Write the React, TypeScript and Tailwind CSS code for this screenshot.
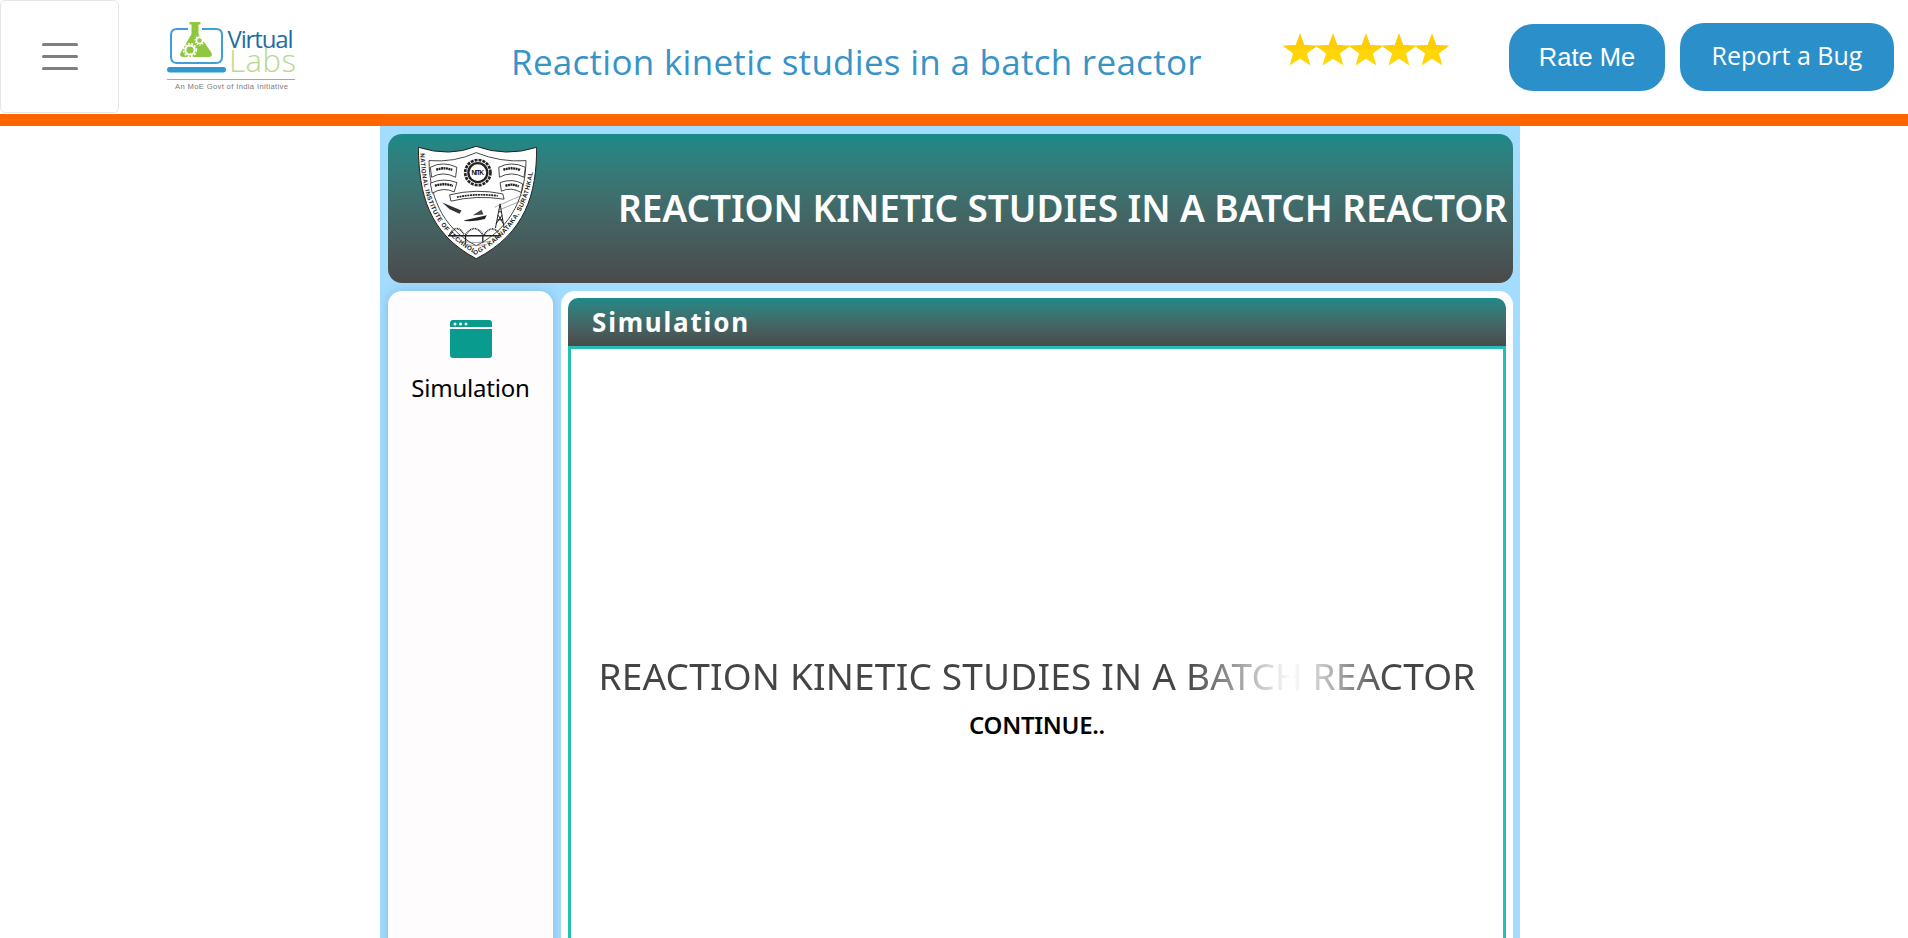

const Star = () => (
  <svg viewBox="0 0 34 32" className="block h-[33px] w-[34px] -mr-[1px]">
    <path d="M17 0 L21.2 11.6 L34 12.2 L24 20 L27.4 32 L17 25.2 L6.6 32 L10 20 L0 12.2 L12.8 11.6 Z" fill="#ffd60a" />
    <path d="M12.8 11.6 L17 0 L21.2 11.6 L34 12.2 L29 16 L5 16 L0 12.2 Z" fill="#ffcd05" />
  </svg>
);

const Logo = () => (
  <svg viewBox="167 20 130 72" className="block h-[72px] w-[130px] shrink-0">
    <path d="M188 29 H177 Q171 29 171 35 V57 Q171 63 177 63 H216 Q222 63 222 57 V35 Q222 29 216 29 H202" fill="none" stroke="#3f9fd6" strokeWidth="2" />
    <path d="M169 67 H224 Q226 67 226 69.5 Q226 72.5 223 72.5 H170 Q167 72.5 167 69.5 Q167 67 169 67 Z" fill="#3298d0" />
    <path d="M189.5 22 H200.5 V24.5 H198.5 V34 L211 52 Q214 57 208 57 H184 Q178 57 181 52 L191.5 34 V24.5 H189.5 Z" fill="#8fc73e" />
    <circle cx="190" cy="50" r="4.6" fill="none" stroke="#fff" strokeWidth="2" />
    <circle cx="190" cy="50" r="6.4" fill="none" stroke="#fff" strokeWidth="1.6" strokeDasharray="2 1.4" />
    <circle cx="199.5" cy="40.5" r="3" fill="none" stroke="#fff" strokeWidth="1.4" />
    <circle cx="199.5" cy="40.5" r="4.4" fill="none" stroke="#fff" strokeWidth="1.2" strokeDasharray="1.5 1.2" />
    <text x="227.5" y="47.5" fontFamily="'Open Sans', sans-serif" fontSize="24" fontWeight="500" fill="#1f6ea3" textLength="66">Virtual</text>
    <text x="229" y="72" fontFamily="'Open Sans', sans-serif" fontSize="31" fontWeight="300" fill="#b6da8c" textLength="67">Labs</text>
    <rect x="167" y="79" width="128" height="1" fill="#a8a8a8" />
    <text x="175" y="89" fontFamily="'Liberation Sans', sans-serif" fontSize="7.6" fill="#7a7a7a" textLength="113">An MoE Govt of India Initiative</text>
  </svg>
);

const Shield = () => (
  <svg viewBox="145 78 358 340" className="block h-[113px] w-[119px] shrink-0">
    <path d="M146 82 Q240 112 320 79 Q410 112 502 82 C502 220 470 340 320 417 C175 340 148 220 146 82 Z" fill="#fff" stroke="#222" strokeWidth="3" />
    <path d="M178 122 Q255 128 320 98 Q395 128 470 122 C468 220 435 320 320 378 C210 320 180 220 178 122 Z" fill="#fff" stroke="#222" strokeWidth="2.5" />
    <path id="band" d="M152 100 C156 225 190 335 320 404 C450 335 490 225 496 100" fill="none" />
    <text fontFamily="'Liberation Sans', sans-serif" fontSize="19" fontWeight="700" fill="#222">
      <textPath href="#band" textLength="680">NATIONAL INSTITUTE OF TECHNOLOGY KARNATAKA, SURATHKAL</textPath>
    </text>
    <circle cx="325" cy="158" r="38" fill="none" stroke="#222" strokeWidth="8" strokeDasharray="9 3" />
    <circle cx="325" cy="158" r="32" fill="#222" />
    <circle cx="325" cy="158" r="25" fill="#fff" />
    <text x="325" y="166" textAnchor="middle" fontFamily="'Liberation Sans', sans-serif" fontSize="20" fontWeight="700" fill="#111" textLength="38">NITK</text>
    <path d="M182 142 Q220 122 262 142 L258 172 Q220 152 186 172 Z" fill="#fff" stroke="#222" strokeWidth="2.5" />
    <path d="M182 190 Q220 172 262 188 L254 216 Q220 200 188 220 Z" fill="#fff" stroke="#222" strokeWidth="2.5" />
    <path d="M388 142 Q425 122 468 142 L464 172 Q425 152 390 172 Z" fill="#fff" stroke="#222" strokeWidth="2.5" />
    <path d="M392 188 Q430 174 460 192 L456 218 Q425 200 396 214 Z" fill="#fff" stroke="#222" strokeWidth="2.5" />
    <path d="M200 150 Q222 140 248 150 M196 198 Q222 188 250 198 M402 150 Q425 140 452 150 M408 198 Q430 190 448 200" fill="none" stroke="#222" strokeWidth="7" strokeDasharray="6 1.5" />
    <path d="M240 225 Q320 205 400 222 L404 238 Q320 225 244 244 Z" fill="#fff" stroke="#222" strokeWidth="2.5" />
    <path d="M262 232 Q320 220 385 228" fill="none" stroke="#222" strokeWidth="5" strokeDasharray="6 2" />
    <path d="M218 248 L276 272 L270 282 L240 268 Z" fill="#333" />
    <path d="M282 302 L352 286 L346 298 Q320 306 288 304 Z" fill="#222" />
    <path d="M310 286 L336 270 L342 284 Z" fill="#444" />
    <path d="M378 325 L392 252 L404 325 M383 300 H400 M387 276 H397 M380 312 L398 286 M402 312 L386 286" fill="none" stroke="#222" strokeWidth="3" />
    <path d="M376 262 L460 225 M386 272 L462 240" fill="none" stroke="#555" strokeWidth="1.5" />
    <path d="M240 345 Q262 308 284 345 M288 345 Q315 308 340 345 M344 345 Q368 310 392 345" fill="none" stroke="#222" strokeWidth="5" strokeDasharray="3 2" />
    <path d="M235 348 H395 M288 345 V370 M340 345 V370" fill="none" stroke="#222" strokeWidth="4" />
    <path d="M270 365 Q320 372 365 365 M285 375 Q320 380 352 375" fill="none" stroke="#777" strokeWidth="2" />
  </svg>
);

export default function App() {
  return (
    <div className="h-[938px] overflow-hidden bg-white font-['Open_Sans',sans-serif]">
      <header className="flex h-[114px] items-start">
        <button className="flex h-[113px] w-[119px] shrink-0 flex-col items-center justify-center gap-[9px] rounded-[5px] border border-[#e6e6e6] bg-white">
          <span className="block h-[3px] w-[36px] rounded-full bg-[#7f7f7f]" />
          <span className="block h-[3px] w-[36px] rounded-full bg-[#7f7f7f]" />
          <span className="block h-[3px] w-[36px] rounded-full bg-[#7f7f7f]" />
        </button>
        <div className="ml-[48px] mt-[20px]"><Logo /></div>
        <h1 className="ml-[214px] mt-[39px] w-[690px] shrink-0 whitespace-nowrap text-[35px] font-medium leading-[46px] tracking-[0.28px] text-[#3893c7]">
          Reaction kinetic studies in a batch reactor
        </h1>
        <div className="ml-[82px] mt-[33px] flex shrink-0"><Star /><Star /><Star /><Star /><Star /></div>
        <div className="ml-[61px] mt-[23px] flex shrink-0 items-start gap-[15px]">
          <button className="mt-px flex h-[67px] w-[156px] items-center justify-center rounded-[24px] bg-[#2b8fca] font-['Liberation_Sans',sans-serif] text-[25.5px] text-white">Rate Me</button>
          <button className="flex h-[68px] w-[214px] items-center justify-center rounded-[24px] bg-[#2b8fca] pb-[2px] text-[25px] text-white">Report a Bug</button>
        </div>
      </header>
      <div className="h-[12px] bg-[#ff6600]" />
      <main className="ml-[380px] h-[812px] w-[1140px] bg-[#a2dcff] px-2 pt-2">
        <section className="flex h-[149px] w-[1125px] items-center rounded-[14px] bg-linear-to-b from-[#1b8a88] to-[#4a4a4a] pl-[30px]">
          <div className="-mt-[13px]"><Shield /></div>
          <h2 className="ml-[81px] mt-[-3px] whitespace-nowrap font-['Noto_Sans',sans-serif] text-[37px] font-semibold leading-none tracking-[-0.06px] text-white">
            REACTION KINETIC STUDIES IN A BATCH REACTOR
          </h2>
        </section>
        <div className="mt-2 flex h-[700px] w-[1125px] gap-2">
          <aside className="flex w-[165px] shrink-0 flex-col items-center rounded-t-[14px] bg-[#fffcfe] pt-[29px] shadow-[0_0_12px_rgba(70,110,140,0.28)]">
            <svg viewBox="0 0 42 38" className="block h-[38px] w-[42px]">
              <path d="M3 0 H39 Q42 0 42 3 V7 H0 V3 Q0 0 3 0 Z" fill="#0a9b8f" />
              <path d="M0 9 H42 V35 Q42 38 39 38 H3 Q0 38 0 35 Z" fill="#0a9b8f" />
              <circle cx="5" cy="4" r="1.5" fill="#fff" />
              <circle cx="10.5" cy="4" r="1.5" fill="#fff" />
              <circle cx="16" cy="4" r="1.5" fill="#fff" />
            </svg>
            <span className="mt-[13px] font-['Noto_Sans',sans-serif] text-[24px] leading-[33px] tracking-[-0.2px] text-black">Simulation</span>
          </aside>
          <div className="min-w-0 flex-1 rounded-t-[14px] bg-white px-[7px] pt-[7px]">
            <div className="flex h-[48px] items-center rounded-t-[10px] bg-linear-to-b from-[#1b8a88] to-[#4a4a4a] pl-[24px]">
              <h3 className="-mt-[1px] font-['Noto_Sans',sans-serif] text-[26px] font-bold leading-none tracking-[1.8px] text-white">Simulation</h3>
            </div>
            <div className="flex h-[641px] flex-col items-center border-x-[3px] border-t-[3px] border-[#25bfb5] bg-white pt-[305px]">
              <p className="whitespace-nowrap bg-[linear-gradient(90deg,#444_0%,#444_67%,#fff_79%,#444_90%,#444_100%)] bg-clip-text font-['Noto_Sans',sans-serif] text-[37px] leading-[44px] tracking-[0.2px] text-transparent">
                REACTION KINETIC STUDIES IN A BATCH REACTOR
              </p>
              <p className="mt-[10px] font-['Noto_Sans',sans-serif] text-[24px] font-semibold leading-[33px] tracking-[-0.3px] text-black">CONTINUE..</p>
            </div>
          </div>
        </div>
      </main>
    </div>
  );
}
